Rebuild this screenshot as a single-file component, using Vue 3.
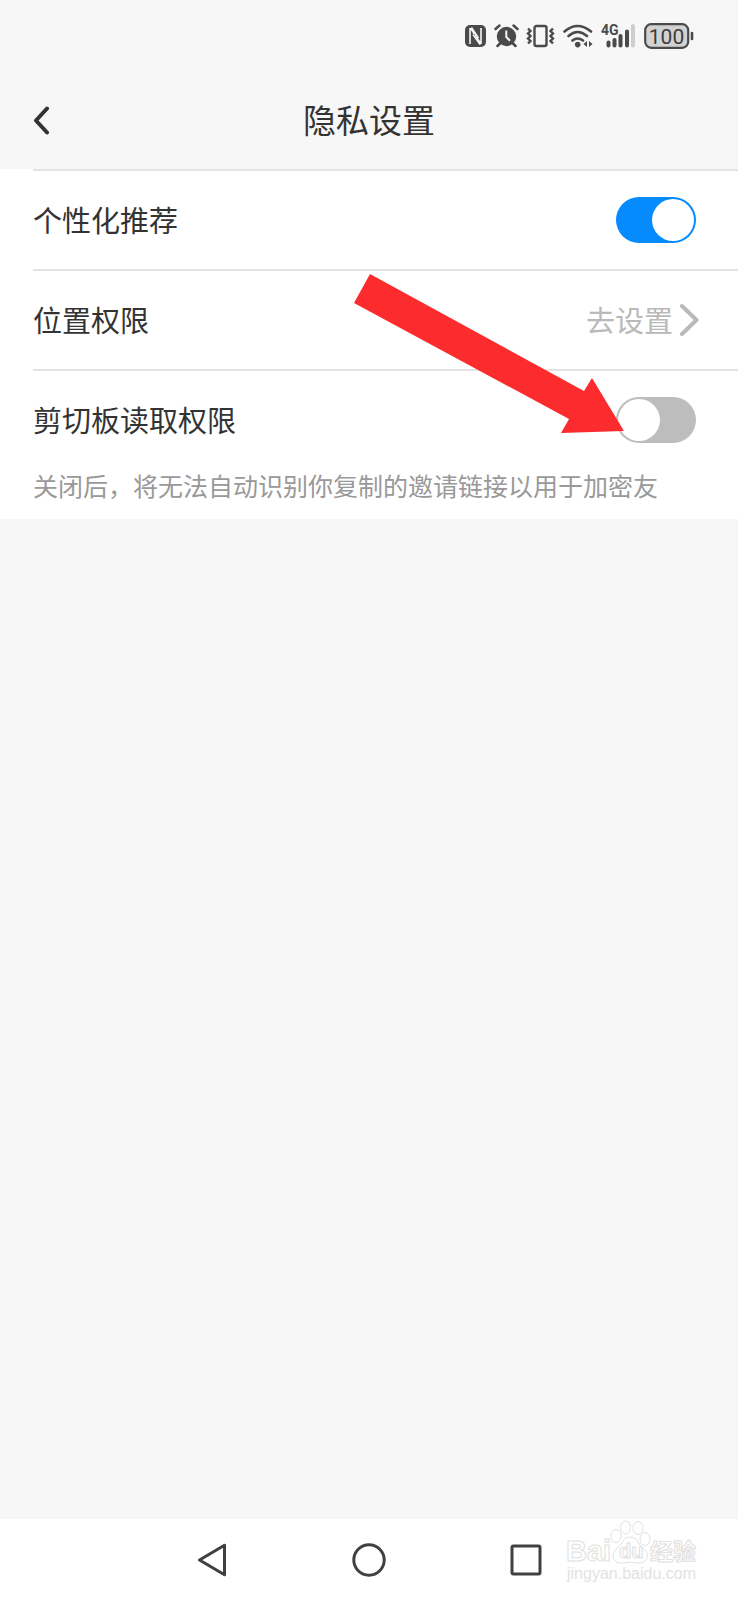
<script setup>
import { ref } from 'vue'

const personalized = ref(true)
const clipboard = ref(false)
</script>

<template>
  <div class="screen">
    <div class="status" aria-label="状态栏">
      <svg class="nfc" width="22" height="24" viewBox="0 0 22 24">
        <rect x="0" y="1" width="21" height="22" rx="5" fill="#4a4a4a" />
        <path d="M5 4V20M5.5 4L16 20M16 4V20" fill="none" stroke="#f7f7f7" stroke-width="1.6" />
        <path d="M8.5 10V20.5M12.8 3.5V13" fill="none" stroke="#4a4a4a" stroke-width="2.4" />
        <path d="M8 10.5L15 20.5M6.5 3.5L13.5 14" fill="none" stroke="#f7f7f7" stroke-width="1.4" />
      </svg>
      <svg class="alarm" width="25" height="24" viewBox="0 0 25 24">
        <circle cx="12.5" cy="12.5" r="9.7" fill="#4a4a4a" />
        <path d="M1.5 5L5.5 1.5M23.5 5L19.5 1.5M6.5 19L3.5 22M18.5 19L21.5 22" stroke="#4a4a4a" stroke-width="2.5" stroke-linecap="round" />
        <path d="M12.3 6.5V13L16 16.8" fill="none" stroke="#f7f7f7" stroke-width="2" />
      </svg>
      <svg class="vibrate" width="30" height="24" viewBox="0 0 30 24">
        <rect x="8.5" y="2" width="12" height="20" rx="2" fill="none" stroke="#4a4a4a" stroke-width="2.4" />
        <path d="M2 4.5L4.5 7L2 9.5L4.5 12L2 14.5L4.5 17L2 19.5M27 4.5L24.5 7L27 9.5L24.5 12L27 14.5L24.5 17L27 19.5" fill="none" stroke="#4a4a4a" stroke-width="2.4" />
      </svg>
      <svg class="wifi" width="31" height="24" viewBox="0 0 31 24">
        <path d="M1.5 7.5Q14.5 -3.5 28 7.5M5.5 12Q14.5 4 24 12M9.5 16.5Q14.5 12.5 20 16.5" fill="none" stroke="#4a4a4a" stroke-width="2.6" stroke-linecap="round" />
        <circle cx="14.7" cy="20.6" r="2.8" fill="#4a4a4a" />
        <path d="M24 17V23L20.5 20ZM26 17V23L29.5 20Z" fill="#4a4a4a" />
      </svg>
      <svg class="signal" width="36" height="26" viewBox="0 0 36 26">
        <text class="net" x="0" y="12">4G</text>
        <path d="M7.5 19.5V22.5M13.5 17V22.5M19.5 13V22.5M26 8.5V22.5" stroke="#4a4a4a" stroke-width="4" stroke-linecap="round" />
        <path d="M32 3V22.5" stroke="#cecece" stroke-width="4" stroke-linecap="round" />
      </svg>
      <svg class="battery" width="50" height="26" viewBox="0 0 50 26">
        <rect x="1.2" y="1.2" width="43" height="23.6" rx="6" fill="#d2d2d2" stroke="#4a4a4a" stroke-width="2.2" />
        <text class="level" x="22.5" y="20.5" text-anchor="middle">100</text>
        <path d="M48 10V16" stroke="#4a4a4a" stroke-width="2.6" stroke-linecap="round" />
      </svg>
    </div>

    <header class="header">
      <button class="back" type="button" aria-label="返回">
        <svg width="18" height="30" viewBox="0 0 18 30">
          <path d="M15 2.5L4 14.5L15 26.5" fill="none" stroke="#333" stroke-width="4" stroke-linecap="round" stroke-linejoin="round" />
        </svg>
      </button>
      <h1>隐私设置</h1>
    </header>

    <main class="list">
      <div class="row">
        <label class="text" for="personalized">个性化推荐</label>
        <input id="personalized" v-model="personalized" class="switch" type="checkbox" role="switch" />
      </div>
      <div class="row">
        <span class="text">位置权限</span>
        <a class="go" href="#location"><span class="text">去设置</span>
          <svg width="20" height="34" viewBox="0 0 20 34">
            <path d="M3 3L17.5 17L3 31" fill="none" stroke="#b9b9b9" stroke-width="4" stroke-linecap="round" stroke-linejoin="round" />
          </svg>
        </a>
      </div>
      <div class="row">
        <label class="text" for="clipboard">剪切板读取权限</label>
        <input id="clipboard" v-model="clipboard" class="switch" type="checkbox" role="switch" aria-describedby="clip-hint" />
        <svg class="pointer" width="272" height="162" viewBox="0 0 272 162" aria-hidden="true">
          <path d="M17 1L1 30L216 146L208 160L271 158L239 105L231 118Z" fill="#fc2b2d" />
        </svg>
      </div>
      <p id="clip-hint" class="hint">关闭后，将无法自动识别你复制的邀请链接以用于加密友</p>
    </main>

    <nav class="nav">
      <button type="button" aria-label="后退">
        <svg width="34" height="34" viewBox="0 0 34 34"><path d="M29.5 2.2V31.8L4.5 17Z" /></svg>
      </button>
      <button type="button" aria-label="主页">
        <svg width="34" height="34" viewBox="0 0 34 34"><circle cx="17" cy="17" r="15.2" /></svg>
      </button>
      <button type="button" aria-label="最近任务">
        <svg width="34" height="34" viewBox="0 0 34 34"><rect x="3" y="3" width="28" height="28" rx="1.5" /></svg>
      </button>
      <svg class="watermark" width="136" height="66" viewBox="0 0 136 66">
        <text class="brand" x="0" y="41">Bai</text>
        <g class="paw">
          <ellipse cx="50" cy="16" rx="5" ry="6.5" />
          <ellipse cx="59.5" cy="7.5" rx="5" ry="6.5" />
          <ellipse cx="72" cy="8" rx="5" ry="6.5" />
          <ellipse cx="79" cy="19" rx="5" ry="6.5" />
          <path d="M64 17C72 17 71 24 77 28C86 35 80 44 72 43Q64 41 57 43C47 44 44 35 51 28C57 24 57 17 64 17Z" />
        </g>
        <text class="du" x="53" y="38">du</text>
        <text class="cn" x="84" y="40">经验</text>
        <text class="site" x="1" y="59">jingyan.baidu.com</text>
      </svg>
    </nav>
  </div>
</template>

<style>
body {
  margin: 0;
  background: #f7f7f7;
}
</style>

<style scoped>
.screen {
  display: flex;
  flex-direction: column;
  min-height: 100vh;
  background: #f7f7f7;
  color: #333;
  font-family: "Noto Sans CJK SC", sans-serif;
}

.status {
  display: flex;
  align-items: center;
  justify-content: flex-end;
  gap: 7px;
  height: 72px;
  padding-right: 44px;
  box-sizing: border-box;
}

.net {
  font: 700 14px Roboto, sans-serif;
  fill: #4a4a4a;
}

.level {
  font: 400 21px Roboto, sans-serif;
  fill: #3c3c3c;
}

.header {
  display: grid;
  grid-template-columns: 80px 1fr 80px;
  align-items: center;
  height: 97px;
}

button {
  padding: 0;
  border: 0;
  background: none;
}

svg {
  display: block;
  flex: none;
}

.back {
  justify-self: start;
  padding-left: 32px;
}

h1 {
  grid-column: 2;
  margin: 0;
  padding-bottom: 3px;
  font-size: 33px;
  font-weight: 400;
  line-height: 48px;
  text-align: center;
}

.list {
  padding-left: 33px;
  background: #fff;
}

.row {
  position: relative;
  display: flex;
  align-items: center;
  justify-content: space-between;
  height: 98px;
  padding-right: 42px;
  border-top: 2px solid #e3e3e3;
  font-size: 29px;
  line-height: 42px;
}

.text {
  padding-bottom: 3px;
}

.switch {
  appearance: none;
  width: 80px;
  height: 46px;
  margin: 0;
  padding: 2px;
  border-radius: 23px;
  box-sizing: border-box;
  background: #bdbdbd;
}

.switch::before {
  content: "";
  display: block;
  width: 42px;
  height: 42px;
  border-radius: 50%;
  background: #fff;
}

.switch:checked {
  background: #068bff;
}

.switch:checked::before {
  margin-left: auto;
}

.go {
  display: flex;
  align-items: center;
  gap: 6px;
  margin-right: -3px;
  color: #b9b9b9;
  text-decoration: none;
}

.pointer {
  position: absolute;
  right: 113px;
  bottom: 34px;
  pointer-events: none;
}

.hint {
  margin: 0;
  padding-bottom: 18px;
  color: #999;
  font-size: 25px;
  line-height: 32px;
  white-space: nowrap;
}

.nav {
  position: relative;
  display: flex;
  align-items: center;
  justify-content: center;
  gap: 123px;
  height: 81px;
  margin-top: auto;
  background: #fff;
}

.nav button svg {
  fill: none;
  stroke: #404040;
  stroke-width: 3;
  stroke-linejoin: round;
}

.watermark {
  position: absolute;
  right: 36px;
  bottom: 14px;
  fill: #fff;
  stroke: #e0e0e0;
  stroke-width: 1;
}

.brand {
  font: 700 29px "Liberation Sans", sans-serif;
}

.du {
  font: 700 20px "Liberation Sans", sans-serif;
}

.cn {
  font: 700 23px "Noto Sans CJK SC", sans-serif;
}

.site {
  font: 400 16px "Liberation Sans", sans-serif;
  fill: #e2e2e2;
  stroke: none;
}
</style>
